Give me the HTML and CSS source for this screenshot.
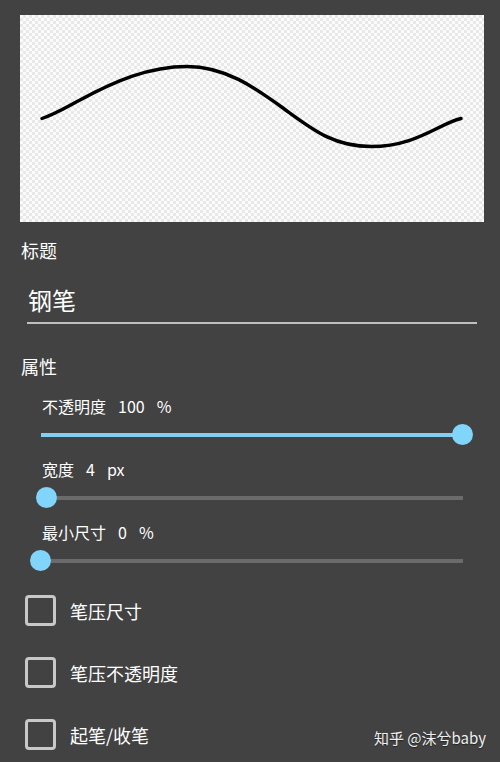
FILE: index.html
```html
<!DOCTYPE html>
<html lang="zh-CN">
<head>
<meta charset="utf-8">
<meta name="viewport" content="width=device-width, initial-scale=1">
<title>钢笔</title>
<link rel="stylesheet" href="styles.css">
</head>
<body>
<main class="panel">
  <div class="preview">
    <svg class="stroke" viewBox="0 0 464 207" aria-hidden="true">
      <path d="M22 103.5C35 99 45 93 60 85C95 66 129 51.5 167 51.5C205 51.5 234 72 263 93C292 114 313 131.5 351 131.5C396 131.5 418 109 441 103.5"/>
    </svg>
  </div>

  <label class="heading" for="brush-name">标题</label>
  <input class="name" id="brush-name" type="text" value="钢笔">

  <h2 class="heading heading-section">属性</h2>
  <div class="sliders">
    <div class="slider">
      <label class="slider-label" for="opacity"><span>不透明度</span> <span>100</span> <span>%</span></label>
      <input class="range" id="opacity" type="range" min="0" max="100" value="100" style="--fill: 100%">
    </div>
    <div class="slider">
      <label class="slider-label" for="width"><span>宽度</span> <span>4</span> <span>px</span></label>
      <input class="range" id="width" type="range" min="1" max="200" value="4" style="--fill: 1.5%">
    </div>
    <div class="slider">
      <label class="slider-label" for="min-size"><span>最小尺寸</span> <span>0</span> <span>%</span></label>
      <input class="range" id="min-size" type="range" min="0" max="100" value="0" style="--fill: 0%">
    </div>
  </div>

  <div class="checks">
    <label class="check"><input class="box" type="checkbox">笔压尺寸</label>
    <label class="check"><input class="box" type="checkbox">笔压不透明度</label>
    <label class="check"><input class="box" type="checkbox">起笔/收笔</label>
  </div>
  <div class="credit">知乎 @沫兮baby</div>
</main>
</body>
</html>
```
FILE: styles.css
```css
* {
  box-sizing: border-box;
}

body {
  margin: 0;
  background: #424242;
  color: #fff;
  font-family: "Noto Sans CJK SC", sans-serif;
  font-weight: 400;
}

.panel {
  position: relative;
  padding: 15px 16px 12px 20px;
}

.preview {
  background: repeating-conic-gradient(#e8e8e8 0% 25%, #fbfbfb 0% 50%) 0 0 / 6px 6px;
}

.stroke {
  display: block;
  width: 100%;
  fill: none;
  stroke: #000;
  stroke-width: 3.4;
  stroke-linecap: round;
}

.heading {
  display: block;
  margin: 14px 0 0 1px;
  font-size: 18px;
  font-weight: 400;
  line-height: 28px;
}

.heading-section {
  margin-top: 28px;
}

.name {
  display: block;
  width: calc(100% - 14px);
  height: 44px;
  margin: 16px 7px 0;
  padding: 0 1px 4px;
  border: 0;
  border-bottom: 2px solid #c0c0c0;
  outline: 0;
  background: none;
  color: inherit;
  font: inherit;
  font-size: 24px;
}

.sliders {
  display: grid;
  gap: 12px;
  margin: 14px 11px 0 10px;
}

.slider-label {
  display: flex;
  gap: 12px;
  padding-left: 12px;
  font-size: 16px;
  line-height: 24px;
}

.range {
  display: block;
  width: 100%;
  height: 21px;
  margin: 6px 0 0;
  appearance: none;
  background: none;
}

.range::-webkit-slider-runnable-track {
  height: 21px;
  background: linear-gradient(to right, #84cef2 var(--fill), #6b6b6b var(--fill)) center / calc(100% - 21px) 4px no-repeat;
}

.range::-webkit-slider-thumb {
  width: 21px;
  height: 21px;
  appearance: none;
  border-radius: 50%;
  background: #81d4fa;
}

.checks {
  display: grid;
  gap: 31px;
  justify-items: start;
  margin: 24px 5px 0;
}

.check {
  display: flex;
  align-items: center;
  gap: 14px;
  height: 31px;
  font-size: 18px;
}

.box {
  width: 31px;
  height: 31px;
  margin: 0;
  appearance: none;
  border: 3px solid #c8c8c8;
  border-radius: 4px;
}

.box:checked {
  background: #81d4fa;
}

.credit {
  position: absolute;
  right: 14px;
  bottom: 12px;
  font-size: 15px;
  font-weight: 400;
  line-height: 24px;
  color: #f0f0f0;
  text-shadow: 0 1px 1px #222;
}
```
